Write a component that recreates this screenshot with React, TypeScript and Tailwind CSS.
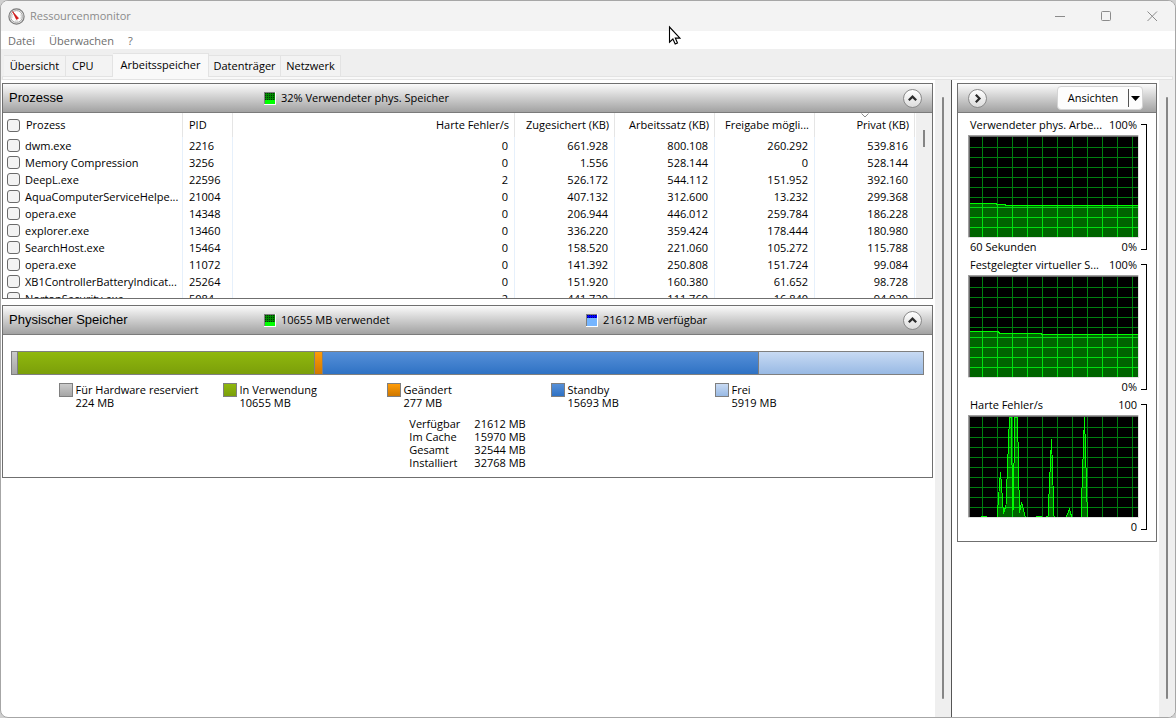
import type { ReactNode } from "react";

type Column = { label: string; width: string; numeric?: boolean; sorted?: boolean };

const COLUMNS: Column[] = [
  { label: "Prozess", width: "w-[180px]" },
  { label: "PID", width: "w-[50px]" },
  { label: "Harte Fehler/s", width: "w-auto", numeric: true },
  { label: "Zugesichert (KB)", width: "w-[100px]", numeric: true },
  { label: "Arbeitssatz (KB)", width: "w-[100px]", numeric: true },
  { label: "Freigabe mögli...", width: "w-[100px]", numeric: true },
  { label: "Privat (KB)", width: "w-[100px]", numeric: true, sorted: true },
];

const PROCESSES = [
  ["dwm.exe", "2216", "0", "661.928", "800.108", "260.292", "539.816"],
  ["Memory Compression", "3256", "0", "1.556", "528.144", "0", "528.144"],
  ["DeepL.exe", "22596", "2", "526.172", "544.112", "151.952", "392.160"],
  ["AquaComputerServiceHelpe...", "21004", "0", "407.132", "312.600", "13.232", "299.368"],
  ["opera.exe", "14348", "0", "206.944", "446.012", "259.784", "186.228"],
  ["explorer.exe", "13460", "0", "336.220", "359.424", "178.444", "180.980"],
  ["SearchHost.exe", "15464", "0", "158.520", "221.060", "105.272", "115.788"],
  ["opera.exe", "11072", "0", "141.392", "250.808", "151.724", "99.084"],
  ["XB1ControllerBatteryIndicat...", "25264", "0", "151.920", "160.380", "61.652", "98.728"],
  ["NortonSecurity.exe", "5084", "2", "441.720", "111.760", "16.840", "94.920"],
];

const TABS = [
  { label: "Übersicht", width: "w-[62px]" },
  { label: "CPU", width: "w-[47px]" },
  { label: "Arbeitsspeicher", width: "w-[96px]" },
  { label: "Datenträger", width: "w-[72px]" },
  { label: "Netzwerk", width: "w-[60px]" },
];

const MEMORY = [
  { label: "Für Hardware reserviert", value: "224 MB", share: 5, fill: "bg-linear-to-b from-[#cbcbcb] to-[#a6a6a6]" },
  { label: "In Verwendung", value: "10655 MB", share: 297, fill: "bg-linear-to-b from-[#90b80e] to-[#7b9f0a]" },
  { label: "Geändert", value: "277 MB", share: 7, fill: "bg-linear-to-b from-[#ff9c08] to-[#cf7800]" },
  { label: "Standby", value: "15693 MB", share: 437, fill: "bg-linear-to-b from-[#5690d8] to-[#2e72c4]" },
  { label: "Frei", value: "5919 MB", share: 165, fill: "bg-linear-to-b from-[#c8daf3] to-[#98b9e4]" },
];

const TOTALS = [
  ["Verfügbar", "21612 MB"],
  ["Im Cache", "15970 MB"],
  ["Gesamt", "32544 MB"],
  ["Installiert", "32768 MB"],
];

// Points run from the left edge of the plot to the right, y grows downwards
const GRAPHS = [
  {
    title: "Verwendeter phys. Arbe...",
    max: "100%",
    min: "0%",
    caption: "60 Sekunden",
    points: "2,68.5 28,68.5 28,69.5 37,69.5 37,70.5 170,70.5",
  },
  {
    title: "Festgelegter virtueller S...",
    max: "100%",
    min: "0%",
    caption: "",
    points: "2,56.5 30,56.5 32,58.5 73,58.5 73,59.5 170,59.5",
  },
  {
    title: "Harte Fehler/s",
    max: "100",
    min: "0",
    caption: "",
    points:
      "2,103 13,103 14,101.5 18,101.5 19,103 29,103 32.5,57 35.5,99 38,90 41.5,2 43,2 45,96 47,2 49.5,2 51.5,98 53.5,87 57,101 59,103 73,101.5 76,103 80,101 83.5,24 86,101 87,103 98,103 101.5,94 104,103 113,103 116.5,1 119.5,103 170,103",
  },
];

function AppIcon() {
  return (
    <svg className="size-[17px]" viewBox="0 0 17 17" fill="none">
      <circle cx="8.5" cy="8.5" r="7.6" fill="#e9e9e9" stroke="#7d7d7d" strokeWidth="1.2" />
      <circle cx="8.5" cy="8.5" r="5.9" fill="#fff" stroke="#a9a9a9" />
      <path d="M4 10a4.8 4.8 0 0 1 .5-4M12.8 6.4a4.8 4.8 0 0 1 0 4.4M7 13h3" stroke="#c9c9c9" />
      <path d="m4.6 3.6 5.9 6.7-2 1.1z" fill="#cf1717" stroke="#cf1717" strokeWidth=".7" />
    </svg>
  );
}

function MeterIcon({ kind }: { kind: "used" | "free" }) {
  const used = kind === "used";
  const split = used ? 8 : 4;
  const dots: ReactNode[] = [];
  for (let y = 1; y < split; y += 2) {
    for (let x = 1; x < 11; x += 2) {
      dots.push(<rect key={`${x}-${y}`} x={x} y={y} width="1" height="1" fill={used ? "#003800" : "#00007a"} />);
    }
  }
  return (
    <svg className="h-[13px] w-3 shrink-0" viewBox="0 0 12 13" shapeRendering="crispEdges">
      <rect width="12" height="13" fill="#fff" />
      <rect width="11" height="12" fill="#808080" />
      <rect x="1" y="1" width="10" height="11" fill={used ? "#00ff00" : "#75b5ff"} />
      <rect x="1" y="1" width="10" height={split - 1} fill={used ? "#008a00" : "#0000ff"} />
      {dots}
    </svg>
  );
}

function RoundButton({ label, d }: { label: string; d: string }) {
  return (
    <button
      type="button"
      aria-label={label}
      className="flex size-[19px] shrink-0 items-center justify-center rounded-full border border-[#8a8a8a] bg-linear-to-b from-white to-[#dcdcdc]"
    >
      <svg className="size-[11px]" viewBox="0 0 11 11" fill="none" stroke="#2b2b2b" strokeWidth="2.2">
        <path d={d} />
      </svg>
    </button>
  );
}

function PanelHeader({ title, children }: { title: string; children: ReactNode }) {
  return (
    <header className="flex h-[29px] items-center border-b border-[#7b7b7b] bg-linear-to-b from-[#fbfbfb] to-[#a2a2a2] pr-[10px] pl-[6px]">
      <h2 className="w-[255px] shrink-0 font-['Liberation_Sans',sans-serif] text-[13px]">{title}</h2>
      <div className="grid min-w-0 flex-1 grid-cols-[322px_1fr] items-center">{children}</div>
      <RoundButton label={`${title} einklappen`} d="M1.8 7.3 5.5 3.6 9.2 7.3" />
    </header>
  );
}

function HeaderMeter({ kind, text }: { kind: "used" | "free"; text: string }) {
  return (
    <div className="flex items-center gap-[5px]">
      <MeterIcon kind={kind} />
      <span>{text}</span>
    </div>
  );
}

function CheckBox({ label }: { label: string }) {
  return (
    <input
      type="checkbox"
      aria-label={label}
      className="block size-[13px] shrink-0 appearance-none rounded-[3px] border border-[#6a6a6a] bg-[#f3f3f3]"
    />
  );
}

function ProcessTable() {
  return (
    <div className="flex h-[185px] overflow-hidden">
      <div className="min-w-0 flex-1">
        <table className="w-full table-fixed border-separate border-spacing-0">
          <thead>
            <tr className="h-[24px]">
              {COLUMNS.map((col, i) => (
                <th
                  key={col.label}
                  scope="col"
                  className={`relative border-r border-[#e5e5e5] p-0 font-normal whitespace-nowrap ${col.width} ${
                    col.numeric ? "pr-[5px] text-right" : "pl-[6px] text-left"
                  }`}
                >
                  {i === 0 ? (
                    <span className="-ml-[2px] flex items-center gap-[6px]">
                      <CheckBox label="Alle Prozesse" />
                      {col.label}
                    </span>
                  ) : (
                    col.label
                  )}
                  {col.sorted && (
                    <svg
                      className="absolute top-0 left-1/2 h-[5px] w-[8px] -translate-x-1/2"
                      viewBox="0 0 8 5"
                      fill="none"
                      stroke="#8a8a8a"
                    >
                      <path d="M.5.5 4 4 7.5.5" />
                    </svg>
                  )}
                </th>
              ))}
            </tr>
          </thead>
          <tbody>
            {PROCESSES.map((row) => (
              <tr key={row[1]} className="h-[17px]">
                {row.map((cell, i) => (
                  <td
                    key={COLUMNS[i].label}
                    className={`border-r border-[#e6f0fb] p-0 leading-[17px] whitespace-nowrap ${
                      COLUMNS[i].numeric ? "pr-[6px] text-right" : "pl-[6px]"
                    }`}
                  >
                    {i === 0 ? (
                      <span className="-ml-[2px] flex h-[17px] items-center gap-[5px]">
                        <CheckBox label={cell} />
                        {cell}
                      </span>
                    ) : (
                      cell
                    )}
                  </td>
                ))}
              </tr>
            ))}
          </tbody>
        </table>
      </div>
      <div className="ml-px w-4 bg-[#f0f0f0] pt-[17px]">
        <div className="mx-auto h-[17px] w-[2px] bg-[#858585]" />
      </div>
    </div>
  );
}

function PhysicalMemory() {
  return (
    <div className="px-2 pt-4 pb-2 leading-[13px]">
      <div className="flex h-6 border border-[#7f7f7f]">
        {MEMORY.map((m, i) => (
          <div
            key={m.label}
            className={`${m.fill} ${i > 0 ? "border-l border-[#7f7f7f]" : ""}`}
            style={{ flex: `${m.share} 1 0%` }}
          />
        ))}
      </div>
      <ul className="mt-2 flex justify-center pl-[2px]">
        {MEMORY.map((m) => (
          <li key={m.label} className="flex w-[164px] gap-[3px]">
            <span className={`size-[14px] shrink-0 border border-[#7f7f7f] ${m.fill}`} />
            <span>
              {m.label}
              <br />
              {m.value}
            </span>
          </li>
        ))}
      </ul>
      <dl className="mx-auto mt-2 grid w-fit grid-cols-[65px_auto]">
        {TOTALS.map(([name, value]) => (
          <div key={name} className="col-span-2 grid grid-cols-subgrid">
            <dt>{name}</dt>
            <dd>{value}</dd>
          </div>
        ))}
      </dl>
    </div>
  );
}

function Graph({ graph, id }: { graph: (typeof GRAPHS)[number]; id: string }) {
  const columns = Array.from({ length: 11 }, (_, i) => 14 + i * 15);
  const rows = Array.from({ length: 9 }, (_, i) => 12 + i * 10);
  const area = `2,103 ${graph.points} 170,103`;
  const grid = (color: string) => (
    <g fill={color}>
      {columns.map((x) => (
        <rect key={`c${x}`} x={x} y="2" width="1" height="100" />
      ))}
      {rows.map((y) => (
        <rect key={`r${y}`} x="2" y={y} width="168" height="1" />
      ))}
    </g>
  );
  return (
    <svg className="block h-[103px] w-[171px]" viewBox="0 0 171 103" shapeRendering="crispEdges">
      <rect width="171" height="103" fill="#e3e3e3" />
      <rect width="170" height="102" fill="#a0a0a0" />
      <rect x="1" y="1" width="169" height="101" fill="#696969" />
      <rect x="2" y="2" width="168" height="100" fill="#000" />
      <clipPath id={`${id}-area`}>
        <polygon points={area} />
      </clipPath>
      <clipPath id={`${id}-plot`}>
        <rect x="2" y="2" width="168" height="100" />
      </clipPath>
      {grid("#008010")}
      <g clipPath={`url(#${id}-plot)`}>
        <polygon points={area} fill="#006400" />
        <g clipPath={`url(#${id}-area)`}>{grid("#00e010")}</g>
        <polyline points={graph.points} fill="none" stroke="#00ff00" />
      </g>
    </svg>
  );
}

function GraphBlock({ graph, id }: { graph: (typeof GRAPHS)[number]; id: string }) {
  return (
    <div className="flex h-[140px] pl-[10px]">
      <div className="w-[171px]">
        <div className="flex h-[22px] items-center justify-between px-[2px] pt-[2px] whitespace-nowrap">
          <span>{graph.title}</span>
          <span>{graph.max}</span>
        </div>
        <Graph graph={graph} id={id} />
        <div className="flex h-[15px] items-center justify-between px-[2px] pt-[3px]">
          <span>{graph.caption}</span>
          <span>{graph.min}</span>
        </div>
      </div>
      <div className="mt-[11px] ml-[2px] h-[126px] w-[6px] border-y border-r border-black" />
    </div>
  );
}

function ScrollBar() {
  return (
    <div className="flex w-4 shrink-0 justify-center bg-[#efefef] pt-[17px] pb-[18px]">
      <div className="w-[2px] rounded-full bg-[#868686]" />
    </div>
  );
}

export default function App() {
  return (
    <div className="flex min-h-screen flex-col bg-[#d0d0d0] font-['Open_Sans','Noto_Sans',sans-serif] text-[11px] leading-4 text-black">
      <div className="relative flex flex-1 flex-col overflow-hidden rounded-lg border border-[#a6a6a6] bg-white">
        <div className="flex h-[30px] items-center bg-[#f3f3f3] pl-[7px] text-[#8b8b8b]">
          <AppIcon />
          <h1 className="ml-[5px] flex-1">Ressourcenmonitor</h1>
          <div className="flex h-full">
            <button type="button" aria-label="Minimieren" className="flex w-[46px] items-center justify-center">
              <svg className="size-[11px]" viewBox="0 0 11 11" stroke="#8b8b8b">
                <path d="M0 5.5h10" />
              </svg>
            </button>
            <button type="button" aria-label="Maximieren" className="flex w-[46px] items-center justify-center">
              <svg className="size-[11px]" viewBox="0 0 11 11" fill="none" stroke="#8b8b8b">
                <rect x=".5" y=".5" width="9" height="9" rx="1" />
              </svg>
            </button>
            <button type="button" aria-label="Schließen" className="flex w-[46px] items-center justify-center">
              <svg className="size-[11px]" viewBox="0 0 11 11" fill="none" stroke="#8b8b8b">
                <path d="m.5.5 9.5 9.5M10 .5.5 10" />
              </svg>
            </button>
          </div>
        </div>

        <nav className="flex h-[18px] items-center gap-[14px] bg-white pt-[2px] pl-[7px] text-[#6d6d6d]">
          <button type="button">Datei</button>
          <button type="button">Überwachen</button>
          <button type="button">?</button>
        </nav>

        <div className="bg-[#efefef]">
          <div role="tablist" className="flex h-[27px] items-end pl-[3px]">
            {TABS.map((tab) => {
              const active = tab.label === "Arbeitsspeicher";
              return (
                <button
                  key={tab.label}
                  type="button"
                  role="tab"
                  aria-selected={active}
                  className={`shrink-0 border-t border-r border-[#e3e3e3] whitespace-nowrap ${tab.width} ${
                    active ? "relative -mb-px h-6 bg-[#f9f9f9] pb-[2px]" : "h-[21px] bg-[#f3f3f3]"
                  } ${tab.label === "CPU" ? "pl-[6px] text-left" : "text-center"}`}
                >
                  {tab.label}
                </button>
              );
            })}
          </div>
          <div className="mr-[2px] ml-px h-1 border border-[#e3e3e3] bg-[#f9f9f9]" />
        </div>

        <main className="flex flex-1">
          <div className="flex min-w-0 flex-1 flex-col gap-[6px] pt-[3px] pr-[2px] pl-px">
            <section className="border border-[#6f6f6f]">
              <PanelHeader title="Prozesse">
                <HeaderMeter kind="used" text="32% Verwendeter phys. Speicher" />
              </PanelHeader>
              <ProcessTable />
            </section>
            <section className="border border-[#6f6f6f]">
              <PanelHeader title="Physischer Speicher">
                <HeaderMeter kind="used" text="10655 MB verwendet" />
                <HeaderMeter kind="free" text="21612 MB verfügbar" />
              </PanelHeader>
              <PhysicalMemory />
            </section>
          </div>
          <ScrollBar />

          <aside className="flex shrink-0 border-l border-[#555555]">
            <div className="w-[207px] pt-[3px] pr-[2px] pl-[5px]">
              <section className="border border-[#6f6f6f] pb-2">
                <header className="flex h-[29px] items-center justify-between border-b border-[#7b7b7b] bg-linear-to-b from-[#fbfbfb] to-[#a2a2a2] pr-[13px] pl-[10px]">
                  <RoundButton label="Diagramme ausblenden" d="M3.8 1.8 7.5 5.5 3.8 9.2" />
                  <div className="flex h-6 items-center rounded-[4px] border border-[#d4d4d4] bg-[#fdfdfd]">
                    <button type="button" className="w-[70px] text-center">
                      Ansichten
                    </button>
                    <button
                      type="button"
                      aria-label="Ansicht wählen"
                      className="flex h-[18px] w-[14px] items-center justify-center border-l border-[#555555]"
                    >
                      <svg className="h-[5px] w-[9px]" viewBox="0 0 9 5">
                        <path d="M0 0h9L4.5 5z" />
                      </svg>
                    </button>
                  </div>
                </header>
                <div className="flex flex-col">
                  {GRAPHS.map((graph, i) => (
                    <GraphBlock key={graph.title} graph={graph} id={`graph-${i}`} />
                  ))}
                </div>
              </section>
            </div>
            <ScrollBar />
          </aside>
        </main>

        {/* Mouse pointer */}
        <svg className="absolute top-[24px] left-[667px] h-[20px] w-[13px]" viewBox="0 0 13 20">
          <path
            d="M1.5 2v15.2l3.4-3.2 2.3 5 2.3-1-2.2-4.9h4.6z"
            fill="#fff"
            stroke="#000"
            strokeWidth="1.1"
          />
        </svg>
      </div>
    </div>
  );
}
